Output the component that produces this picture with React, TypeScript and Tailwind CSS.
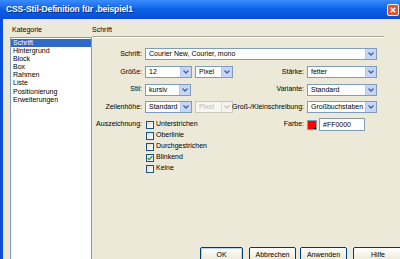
import React from 'react';

const font = { fontFamily: '"Liberation Sans", Arial, sans-serif' };

const Arrow: React.FC<{ disabled?: boolean }> = ({ disabled }) => (
  <div
    className={`w-[11px] h-full flex items-center justify-center border-l ${
      disabled ? 'bg-[#f4f3ee] border-[#e2e0d6]' : 'bg-[#c6d6fb] border-[#b3c7f2]'
    }`}
  >
    <svg width="6" height="4" viewBox="0 0 6 4">
      <path d="M0.5 0.5 L3 3 L5.5 0.5" fill="none" stroke={disabled ? '#c9c7ba' : '#4d6185'} strokeWidth="1.3" />
    </svg>
  </div>
);

const Combo: React.FC<{ value: string; className: string; disabled?: boolean }> = ({ value, className, disabled }) => (
  <div
    className={`h-[12px] flex items-stretch border ${
      disabled ? 'border-[#c9c7ba] bg-[#f7f6f1] text-[#c0bdb0]' : 'border-[#7f9db9] bg-white text-black'
    } ${className}`}
  >
    <div className="flex-1 pl-[3px] leading-[10px] text-[7px] whitespace-nowrap overflow-hidden">{value}</div>
    <Arrow disabled={disabled} />
  </div>
);

const Label: React.FC<{ children: React.ReactNode }> = ({ children }) => (
  <div className="flex justify-end items-center pr-[3px] text-[7px] whitespace-nowrap">{children}</div>
);

const Check: React.FC<{ label: string; checked?: boolean }> = ({ label, checked }) => (
  <div className="h-[11px] flex items-center gap-[2px]">
    <div className="w-[8px] h-[8px] border border-[#1c5180] bg-gradient-to-br from-[#dcdcd7] to-white flex items-center justify-center">
      {checked && (
        <svg width="6" height="6" viewBox="0 0 6 6">
          <path d="M0.7 3 L2.3 4.6 L5.3 1.2" fill="none" stroke="#21a121" strokeWidth="1.3" />
        </svg>
      )}
    </div>
    <span className="text-[7px]">{label}</span>
  </div>
);

const Button: React.FC<{ label: string; w: string; primary?: boolean }> = ({ label, w, primary }) => (
  <div
    className={`${w} h-[14px] shrink-0 rounded-[2px] border border-[#003c74] bg-gradient-to-b from-white to-[#ece9d8] flex items-start justify-center pt-[2px] text-[7px] ${
      primary ? 'shadow-[inset_0_0_0_1px_#bcd4f6]' : ''
    }`}
  >
    {label}
  </div>
);

const categories = ['Schrift', 'Hintergrund', 'Block', 'Box', 'Rahmen', 'Liste', 'Positionierung', 'Erweiterungen'];

export default function App() {
  return (
    <div className="w-[400px] h-[259px] overflow-hidden bg-[#ece9d8] flex flex-col text-black" style={font}>
      {/* title bar */}
      <div className="h-[19px] shrink-0 flex items-center bg-gradient-to-b from-[#3a8cfe] via-[#0a5fe6] to-[#0a4fd6] pl-[6px] pr-[1px]">
        <span className="text-white font-bold text-[8.5px] tracking-[-0.1px] [text-shadow:1px_1px_0_#0a2a7a]">
          CSS-Stil-Definition für .beispiel1
        </span>
        <div className="ml-auto w-[12px] h-[12px] rounded-[2px] border border-[#f4f4f4] bg-[#dc5530] flex items-center justify-center">
          <svg width="6" height="6" viewBox="0 0 6 6">
            <path d="M0.8 0.8 L5.2 5.2 M5.2 0.8 L0.8 5.2" stroke="white" strokeWidth="1.4" />
          </svg>
        </div>
      </div>

      <div className="flex-1 flex border-l-[3px] border-[#0b4edb] min-h-0">
        {/* categories */}
        <div className="w-[89px] shrink-0 pl-[7px] pt-[7px] flex flex-col">
          <div className="h-[8px] leading-[8px] text-[7px] pl-[2px]">Kategorie</div>
          <div className="mt-[3px] -mb-[4px] flex-1 border border-[#7f9db9] bg-white pt-[0.5px]">
            {categories.map((c, i) => (
              <div
                key={c}
                className={`h-[8.2px] leading-[8.2px] text-[7px] pl-[2px] ${
                  i === 0 ? 'bg-[#316ac5] text-white' : ''
                }`}
              >
                {c}
              </div>
            ))}
          </div>
        </div>

        {/* settings */}
        <div className="flex-1 flex flex-col pt-[7px] min-w-0">
          <div className="w-[292px]">
            <div className="h-[8px] leading-[8px] text-[7px]">Schrift</div>
            <div className="mt-[2px] h-[2px] border-t border-[#aca899] border-b border-b-white" />

            <div className="mt-[7px] grid grid-cols-[53px_88px_74px_70px]">
              {/* Schrift */}
              <div className="h-[18px] flex justify-end items-center"><Label>Schrift:</Label></div>
              <div className="col-span-3 h-[18px] flex items-center">
                <Combo value="Courier New, Courier, mono" className="w-[232px]" />
              </div>

              {/* Größe / Stärke */}
              <div className="h-[18px] flex justify-end"><Label>Größe:</Label></div>
              <div className="h-[18px] flex items-center gap-[3px]">
                <Combo value="12" className="w-[47px]" />
                <Combo value="Pixel" className="w-[38px]" />
              </div>
              <div className="h-[18px] flex justify-end"><Label>Stärke:</Label></div>
              <div className="h-[18px] flex items-center">
                <Combo value="fetter" className="w-[70px]" />
              </div>

              {/* Stil / Variante */}
              <div className="h-[17px] flex justify-end"><Label>Stil:</Label></div>
              <div className="h-[17px] flex items-center">
                <Combo value="kursiv" className="w-[46px]" />
              </div>
              <div className="h-[17px] flex justify-end"><Label>Variante:</Label></div>
              <div className="h-[17px] flex items-center">
                <Combo value="Standard" className="w-[70px]" />
              </div>

              {/* Zeilenhöhe / Groß-Kleinschreibung */}
              <div className="h-[18px] flex justify-end"><Label>Zeilenhöhe:</Label></div>
              <div className="h-[18px] flex items-center gap-[3px]">
                <Combo value="Standard" className="w-[47px]" />
                <Combo value="Pixel" className="w-[38px]" disabled />
              </div>
              <div className="h-[18px] flex justify-end"><Label>Groß-/Kleinschreibung:</Label></div>
              <div className="h-[18px] flex items-center">
                <Combo value="Großbuchstaben" className="w-[70px]" />
              </div>

              {/* Auszeichnung / Farbe */}
              <div className="mt-[3px] h-[11px] flex justify-end"><Label>Auszeichnung:</Label></div>
              <div className="mt-[3px] pl-[1px] flex flex-col">
                <Check label="Unterstrichen" />
                <Check label="Oberlinie" />
                <Check label="Durchgestrichen" />
                <Check label="Blinkend" checked />
                <Check label="Keine" />
              </div>
              <div className="mt-[3px] h-[11px] flex justify-end"><Label>Farbe:</Label></div>
              <div className="mt-[3px] h-[11px] flex items-center gap-[2px]">
                <div className="relative w-[10px] h-[10px] border border-[#7f9db9] bg-[#ff0000]">
                  <div className="absolute right-0 bottom-0 w-0 h-0 border-l-[3px] border-l-transparent border-b-[3px] border-b-black" />
                </div>
                <div className="w-[46px] h-[13px] border border-[#7f9db9] bg-white pl-[3px] text-[7px] leading-[11px]">
                  #FF0000
                </div>
              </div>
            </div>
          </div>

          <div className="mt-auto h-[12px] flex items-start pl-[108px]">
            <Button label="OK" w="w-[43px]" primary />
            <div className="w-[6px] shrink-0" />
            <Button label="Abbrechen" w="w-[47px]" />
            <div className="w-[4px] shrink-0" />
            <Button label="Anwenden" w="w-[47px]" />
            <div className="w-[6px] shrink-0" />
            <Button label="Hilfe" w="w-[50px]" />
          </div>
        </div>
      </div>
    </div>
  );
}
